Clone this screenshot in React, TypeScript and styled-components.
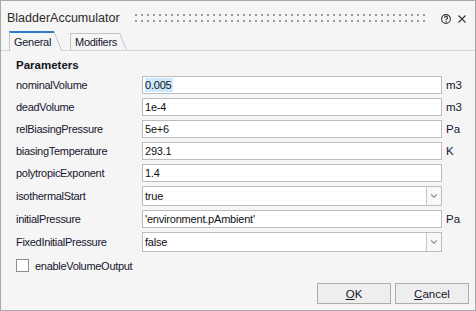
import React from 'react';
import styled, { createGlobalStyle } from 'styled-components';
import { ChevronDown } from 'lucide-react';

const Global = createGlobalStyle`
  html, body { margin: 0; padding: 0; background: #f5f5f5; }
  body { font-family: "Liberation Sans", Arial, sans-serif; }
  * { box-sizing: border-box; }
`;

const Window = styled.div`
  width: 476px;
  height: 311px;
  border: 1px solid #a8a8a8;
  background: #f5f5f5;
  display: flex;
  flex-direction: column;
  overflow: hidden;
  color: #16162e;
`;

const TitleBar = styled.div`
  height: 30px;
  flex-shrink: 0;
  display: flex;
  align-items: flex-start;
  padding: 0 9px 0 6px;
`;

const Title = styled.span`
  font-size: 12.5px;
  line-height: 15px;
  margin-top: 10px;
  color: #2a2a2a;
`;

const Grip = styled.div`
  flex: 1;
  height: 8px;
  margin: 13px 12px 0 15px;
  background-image: radial-gradient(circle at 1px 1px, #9a9a9a 0.95px, transparent 1.15px);
  background-size: 6px 6px;
`;

const TitleIcon = styled.svg`
  display: block;
  flex-shrink: 0;
  margin-top: 13px;
`;

const TabBar = styled.div`
  height: 20px;
  flex-shrink: 0;
  display: flex;
  align-items: flex-end;
  padding-left: 8px;
  border-bottom: 1px solid #d6d6d6;
`;

const Tab = styled.div<{ $active?: boolean }>`
  position: relative;
  z-index: ${p => (p.$active ? 2 : 1)};
  height: ${p => (p.$active ? 20 : 17)}px;
  margin-bottom: ${p => (p.$active ? -1 : 0)}px;
  margin-right: ${p => (p.$active ? 16 : 0)}px;
  padding: 0 3px 0 4px;
  display: flex;
  align-items: center;
  font-size: 11px;
  letter-spacing: -0.3px;
  color: #16162e;
  background: #f5f5f5;
  border-left: 1px solid #c4c4c4;
  border-top: ${p => (p.$active ? '2px solid #2a7dc6' : '1px solid #c4c4c4')};

  &::after {
    content: '';
    position: absolute;
    z-index: -1;
    top: ${p => (p.$active ? -2 : -1)}px;
    bottom: 0;
    right: 0;
    width: 12px;
    background: #f5f5f5;
    border-top: ${p => (p.$active ? '2px solid #2a7dc6' : '1px solid #c4c4c4')};
    border-right: 1px solid #c4c4c4;
    transform-origin: 0 0;
    transform: skewX(23deg);
  }
`;

const Panel = styled.div`
  flex: 1;
  display: flex;
  flex-direction: column;
  padding: 7px 6px 6px 15px;
`;

const SectionTitle = styled.div`
  font-size: 11.5px;
  font-weight: bold;
  line-height: 14px;
  margin-bottom: 4px;
  color: #111122;
`;

const Form = styled.div`
  display: grid;
  grid-template-columns: 126px 300px auto;
  row-gap: 4px;
  align-items: center;
`;

const Label = styled.div`
  font-size: 11px;
  letter-spacing: -0.3px;
  line-height: 14px;
  white-space: nowrap;
`;

const TextField = styled.div`
  height: 18px;
  border: 1px solid #bdbdbd;
  background: #fff;
  padding: 0 2px;
  display: flex;
  align-items: center;
  font-size: 11px;
  letter-spacing: -0.2px;
  color: #111;
  white-space: nowrap;
`;

const Selected = styled.span`
  background: #cce8ff;
  padding: 1px 1px 1px 0;
`;

const Combo = styled.div`
  height: 20px;
  border: 1px solid #bdbdbd;
  background: #fff;
  display: flex;
`;

const ComboText = styled.div`
  flex: 1;
  padding: 0 2px;
  display: flex;
  align-items: center;
  font-size: 11px;
  letter-spacing: -0.2px;
  color: #111;
`;

const ComboButton = styled.div`
  width: 15px;
  border-left: 1px solid #c8c8c8;
  background: #f8f8f8;
  display: flex;
  align-items: center;
  justify-content: center;
  color: #9a9a9a;
`;

const Unit = styled.div`
  font-size: 11.5px;
  padding-left: 4px;
  line-height: 14px;
`;

const CheckRow = styled.div`
  margin-top: 7px;
  display: flex;
  align-items: center;
  gap: 6px;
  font-size: 11px;
  letter-spacing: -0.3px;
`;

const CheckBox = styled.div`
  width: 13px;
  height: 13px;
  border: 1px solid #8e8e8e;
  background: #fff;
`;

const Footer = styled.div`
  margin-top: auto;
  display: flex;
  justify-content: flex-end;
  gap: 4px;
`;

const Button = styled.div`
  width: 74px;
  height: 21px;
  border: 1px solid #adadad;
  background: #eeeeee;
  display: flex;
  align-items: center;
  justify-content: center;
  font-size: 11.5px;
  color: #16162e;
`;

type Row = { label: string; value: string; unit?: string; combo?: boolean; selected?: boolean };

const rows: Row[] = [
  { label: 'nominalVolume', value: '0.005', unit: 'm3', selected: true },
  { label: 'deadVolume', value: '1e-4', unit: 'm3' },
  { label: 'relBiasingPressure', value: '5e+6', unit: 'Pa' },
  { label: 'biasingTemperature', value: '293.1', unit: 'K' },
  { label: 'polytropicExponent', value: '1.4' },
  { label: 'isothermalStart', value: 'true', combo: true },
  { label: 'initialPressure', value: "'environment.pAmbient'", unit: 'Pa' },
  { label: 'FixedInitialPressure', value: 'false', combo: true },
];

export default function App() {
  return (
    <>
      <Global />
      <Window>
        <TitleBar>
          <Title>BladderAccumulator</Title>
          <Grip />
          <TitleIcon width="10" height="10" viewBox="0 0 10 10">
            <circle cx="5" cy="5" r="4.4" fill="none" stroke="#333" strokeWidth="1.1" />
            <path d="M3.5 4 A1.5 1.5 0 1 1 5.6 5.3 Q5 5.6 5 6.3" fill="none" stroke="#333" strokeWidth="1.1" />
            <circle cx="5" cy="7.6" r="0.65" fill="#333" />
          </TitleIcon>
          <TitleIcon width="8" height="8" viewBox="0 0 8 8" style={{ marginLeft: 7, marginTop: 14 }}>
            <path d="M0.5 0.5 L7.5 7.5 M7.5 0.5 L0.5 7.5" stroke="#333" strokeWidth="1.1" />
          </TitleIcon>
        </TitleBar>
        <TabBar>
          <Tab $active>General</Tab>
          <Tab>Modifiers</Tab>
        </TabBar>
        <Panel>
          <SectionTitle>Parameters</SectionTitle>
          <Form>
            {rows.map(r => (
              <React.Fragment key={r.label}>
                <Label>{r.label}</Label>
                {r.combo ? (
                  <Combo>
                    <ComboText>{r.value}</ComboText>
                    <ComboButton>
                      <ChevronDown size={10} strokeWidth={3} />
                    </ComboButton>
                  </Combo>
                ) : (
                  <TextField>{r.selected ? <Selected>{r.value}</Selected> : r.value}</TextField>
                )}
                <Unit>{r.unit ?? ''}</Unit>
              </React.Fragment>
            ))}
          </Form>
          <CheckRow>
            <CheckBox />
            <span>enableVolumeOutput</span>
          </CheckRow>
          <Footer>
            <Button><u>O</u>K</Button>
            <Button><u>C</u>ancel</Button>
          </Footer>
        </Panel>
      </Window>
    </>
  );
}
